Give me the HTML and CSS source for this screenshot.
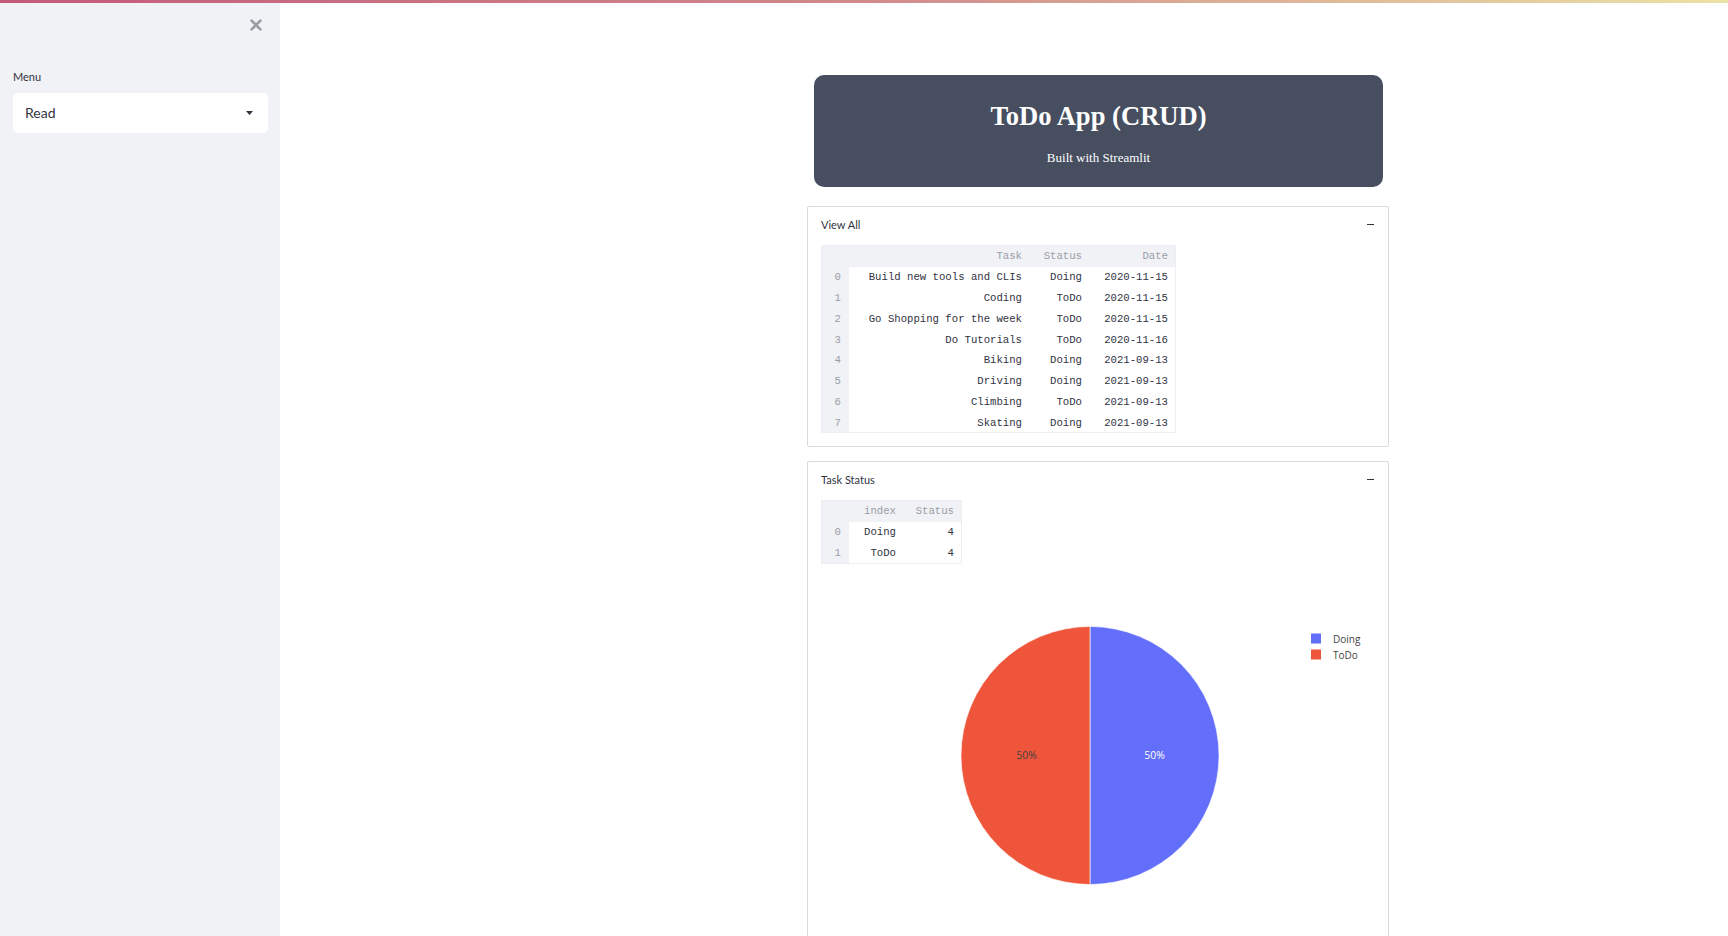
FILE: index.html
```html
<!DOCTYPE html>
<html lang="en">
<head>
<meta charset="utf-8">
<title>ToDo App (CRUD)</title>
<link rel="stylesheet" href="styles.css">
</head>
<body>
<div class="decoration"></div>
<div class="app">
  <aside class="sidebar">
    <div class="sidebar-top">
      <button class="close-btn" aria-label="Close sidebar">
        <svg width="12" height="12" viewBox="0 0 12 12"><path d="M1.6 1.6 L10.4 10.4 M10.4 1.6 L1.6 10.4" stroke="#9b9da4" stroke-width="2.7" stroke-linecap="round" fill="none"/></svg>
      </button>
    </div>
    <label class="widget-label">Menu</label>
    <div class="select">
      <span class="select-value">Read</span>
      <svg class="caret" width="7" height="4" viewBox="0 0 7 4"><path d="M0 0 L7 0 L3.5 4 Z" fill="#31333f"/></svg>
    </div>
  </aside>

  <main class="main">
    <div class="block">
      <div class="banner">
        <h1 class="banner-title">ToDo App (CRUD)</h1>
        <p class="banner-sub">Built with Streamlit</p>
      </div>

      <section class="expander first">
        <div class="exp-header"><span class="exp-label">View All</span><span class="minus"></span></div>
        <div class="exp-body">
          <table class="df df-tasks">
            <colgroup><col class="c-idx"><col class="c-task"><col class="c-status"><col class="c-date"></colgroup>
            <thead><tr><th></th><th>Task</th><th>Status</th><th>Date</th></tr></thead>
            <tbody>
              <tr><td class="idx">0</td><td>Build new tools and CLIs</td><td>Doing</td><td>2020-11-15</td></tr>
              <tr><td class="idx">1</td><td>Coding</td><td>ToDo</td><td>2020-11-15</td></tr>
              <tr><td class="idx">2</td><td>Go Shopping for the week</td><td>ToDo</td><td>2020-11-15</td></tr>
              <tr><td class="idx">3</td><td>Do Tutorials</td><td>ToDo</td><td>2020-11-16</td></tr>
              <tr><td class="idx">4</td><td>Biking</td><td>Doing</td><td>2021-09-13</td></tr>
              <tr><td class="idx">5</td><td>Driving</td><td>Doing</td><td>2021-09-13</td></tr>
              <tr><td class="idx">6</td><td>Climbing</td><td>ToDo</td><td>2021-09-13</td></tr>
              <tr><td class="idx">7</td><td>Skating</td><td>Doing</td><td>2021-09-13</td></tr>
            </tbody>
          </table>
        </div>
      </section>

      <section class="expander second">
        <div class="exp-header"><span class="exp-label">Task Status</span><span class="minus"></span></div>
        <div class="exp-body">
          <table class="df df-status">
            <colgroup><col class="c-idx"><col class="c-index"><col class="c-count"></colgroup>
            <thead><tr><th></th><th>index</th><th>Status</th></tr></thead>
            <tbody>
              <tr><td class="idx">0</td><td>Doing</td><td>4</td></tr>
              <tr><td class="idx">1</td><td>ToDo</td><td>4</td></tr>
            </tbody>
          </table>
          <div class="chart">
            <svg width="553" height="450" viewBox="0 0 553 450">
              <path d="M269 177.5 L269 48.5 A129 129 0 0 1 269 306.5 Z" fill="#636efa" stroke="#ffffff" stroke-width="0.6"/>
              <path d="M269 177.5 L269 306.5 A129 129 0 0 1 269 48.5 Z" fill="#ef553b" stroke="#ffffff" stroke-width="0.6"/>
              <text x="333.5" y="181" class="pie-label light">50%</text>
              <text x="205.5" y="181" class="pie-label dark">50%</text>
              <rect x="490" y="55.5" width="10" height="10" fill="#636efa"/>
              <rect x="490" y="71.5" width="10" height="10" fill="#ef553b"/>
              <text x="512" y="64.5" class="legend-text">Doing</text>
              <text x="512" y="80.5" class="legend-text">ToDo</text>
            </svg>
          </div>
        </div>
      </section>
    </div>
  </main>
</div>
</body>
</html>
```

FILE: styles.css
```css
* { box-sizing: border-box; }

html, body {
  margin: 0;
  padding: 0;
}

body {
  font-family: Lato, "Noto Sans", sans-serif;
  color: #31333f;
  background: #ffffff;
}

.decoration {
  position: fixed;
  top: 0;
  left: 0;
  right: 0;
  height: 3px;
  background: linear-gradient(90deg, #c45a7a 0%, #d08a8c 50%, #ebe2a6 100%);
  z-index: 10;
}

.app {
  display: flex;
  min-height: 100vh;
}

/* Sidebar */
.sidebar {
  width: 280px;
  flex: none;
  background: #f0f2f6;
  padding: 0 12px 0 13px;
}

.sidebar-top {
  height: 70px;
  padding-top: 19px;
  padding-right: 6px;
  display: flex;
  justify-content: flex-end;
  align-items: flex-start;
}

.close-btn {
  width: 12px;
  height: 12px;
  padding: 0;
  border: 0;
  background: transparent;
  display: block;
}

.close-btn svg { display: block; }

.widget-label {
  display: block;
  font-size: 11px;
  line-height: 14px;
  margin-bottom: 9px;
  color: #31333f;
}

.select {
  height: 40px;
  background: #ffffff;
  border-radius: 5px;
  display: flex;
  align-items: center;
  justify-content: space-between;
  padding: 0 15px 0 12px;
  font-size: 14px;
}

.select-value { line-height: 16px; margin-top: -1px; }

.caret { display: block; }

/* Main */
.main {
  flex: 1;
  min-width: 0;
}

.block {
  width: 582px;
  margin-left: 527px;
  padding-top: 75px;
  padding-bottom: 40px;
}

.banner {
  margin: 0 6px 0 7px;
  background: #464e5f;
  border-radius: 10px;
  padding: 26px 8px 21px;
  color: #ffffff;
  font-family: "Liberation Serif", "Times New Roman", serif;
  text-align: center;
}

.banner-title {
  margin: 0;
  font-size: 26.6px;
  line-height: 30px;
  font-weight: 700;
}

.banner-sub {
  margin: 19px 0 0;
  font-size: 13px;
  line-height: 16px;
}

.expander {
  border: 1px solid #d9dadd;
  border-radius: 2px;
}

.expander.first { margin-top: 19px; }
.expander.second { margin-top: 14px; }

.exp-header {
  height: 35px;
  padding: 0 14px 0 13px;
  display: flex;
  align-items: center;
  justify-content: space-between;
  font-size: 11px;
  color: #31333f;
}

.minus {
  width: 7px;
  height: 1px;
  background: #31333f;
}

.exp-body {
  padding: 3px 14px 13px 13px;
}

/* Dataframes */
.df {
  border-collapse: collapse;
  table-layout: fixed;
  font-family: "Liberation Mono", "DejaVu Sans Mono", monospace;
  font-size: 10.65px;
  color: #31333f;
  outline: 1px solid #eceef2;
  outline-offset: -1px;
}

.df-tasks { width: 355px; }
.df-status { width: 141px; }

.c-idx { width: 28px; }
.c-task { width: 181px; }
.c-status { width: 60px; }
.c-date { width: 86px; }
.c-index { width: 55px; }
.c-count { width: 58px; }

.df th,
.df td {
  padding: 0 8px 0 0;
  text-align: right;
  white-space: nowrap;
  overflow: hidden;
}

.df th {
  height: 22px;
  font-weight: 400;
  color: #9a9da6;
  background: #f0f2f6;
}

.df td {
  height: 20.75px;
}

.df td.idx {
  color: #9a9da6;
  background: #f0f2f6;
}

/* Chart */
.chart {
  margin-top: 14px;
  height: 450px;
}

.chart svg { display: block; }

.pie-label {
  font-family: "Open Sans", sans-serif;
  font-size: 10.4px;
  text-anchor: middle;
}

.pie-label.light { fill: #ffffff; }
.pie-label.dark { fill: #444444; }

.legend-text {
  font-family: "Open Sans", sans-serif;
  font-size: 10px;
  fill: #444444;
}
```
